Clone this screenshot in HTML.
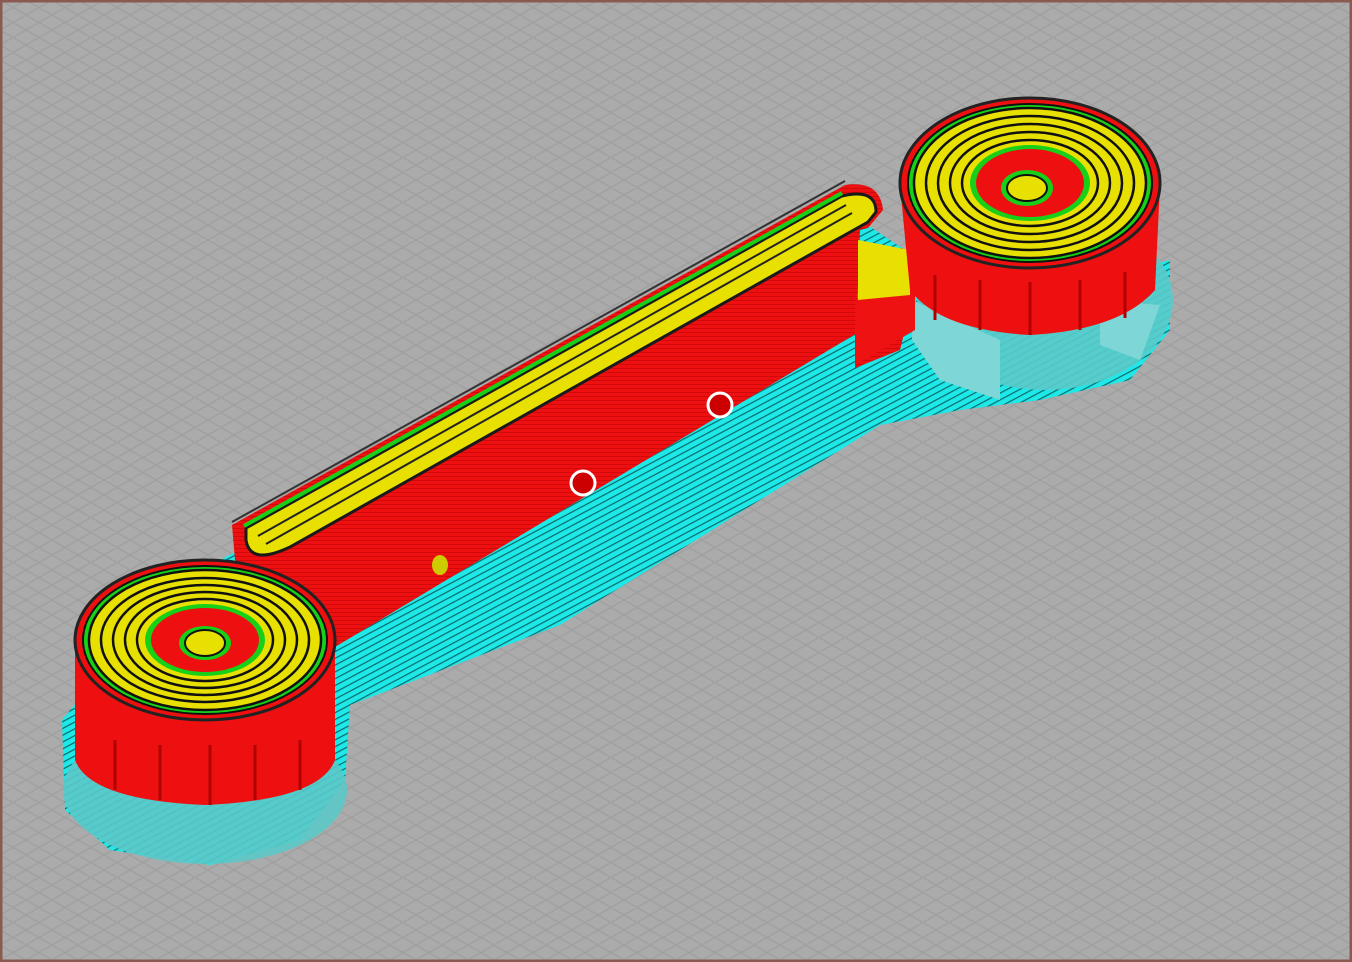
<!DOCTYPE html>
<html><head><style>html,body{margin:0;padding:0;width:1352px;height:962px;overflow:hidden;background:#a9a9a9}</style></head>
<body>
<svg width="1352" height="962" viewBox="0 0 1352 962" xmlns="http://www.w3.org/2000/svg">
<defs>
<pattern id="g" width="26" height="15" patternUnits="userSpaceOnUse">
<rect width="26" height="15" fill="#ababab"/>
<path d="M0 0L26 15M26 0L0 15" stroke="#a0a0a0" stroke-width="1.5"/>
</pattern>
<pattern id="cy" width="6" height="6" patternUnits="userSpaceOnUse" patternTransform="rotate(-28)">
<rect width="6" height="6" fill="#1ee8e8"/><rect width="6" height="1.2" fill="#0a6a6a"/>
</pattern>
<pattern id="rd" width="4" height="4" patternUnits="userSpaceOnUse">
<rect width="4" height="4" fill="#ee1010"/><rect width="4" height="1" fill="#d00a0a"/>
</pattern>
</defs>
<rect width="1352" height="962" fill="url(#g)"/>
<rect x="1" y="1" width="1350" height="960" fill="none" stroke="#8a5a50" stroke-width="3"/>

<!-- cyan base -->
<path d="M220 560 L860 220 L890 240 L980 300 L1100 280 L1170 260 L1170 330 L1130 380 L1040 400 L960 410 L880 425 L560 625 L350 705 L345 780 L300 840 L210 865 L110 850 L65 810 L62 720 L120 650 Z" fill="url(#cy)"/>
<ellipse cx="205" cy="790" rx="142" ry="74" fill="#5cc8c8" opacity="0.9"/>
<ellipse cx="1045" cy="300" rx="128" ry="90" fill="#5ccaca" opacity="0.9"/>
<path d="M912 300 L1000 340 L1000 400 L940 380 L912 340Z" fill="#7ed6d6"/>
<path d="M1100 300 L1160 305 L1140 360 L1100 345Z" fill="#7ed6d6"/>

<!-- red bar -->
<path d="M232 525 L845 185 Q880 180 883 210 L868 228 L860 230 L855 368 L900 350 L912 300 L330 650 L300 640 L235 560 Z" fill="url(#rd)"/>
<path d="M855 300 L915 270 L915 330 L855 365Z" fill="#ee1212"/>
<!-- yellow strip -->
<path d="M246 528 L842 196 Q876 188 876 212 L868 222 L290 547 Q250 566 246 540Z" fill="#e8e000" stroke="#1a1a1a" stroke-width="3"/>
<path d="M258 536 L846 205 M266 544 L852 213" stroke="#222" stroke-width="2"/>
<path d="M244 526 L842 193" stroke="#18d018" stroke-width="4"/>
<path d="M232 522 L845 181" stroke="#333" stroke-width="2"/>
<path d="M858 240 L910 250 L910 295 L858 300Z" fill="#e8e000"/>

<!-- holes -->
<g fill="#fff"><ellipse cx="440" cy="565" rx="8" ry="10" fill="#cc0"/><ellipse cx="583" cy="483" rx="12" ry="12" fill="#c00" stroke="#fff" stroke-width="3"/><ellipse cx="720" cy="405" rx="12" ry="12" fill="#c00" stroke="#fff" stroke-width="3"/></g>

<!-- left knob -->
<path d="M75 640 L75 760 Q90 800 205 805 Q320 800 335 760 L335 640 Z" fill="#ee1010"/>
<g stroke="#b00000" stroke-width="3" fill="none">
<path d="M115 740 V790 M160 745 V800 M210 745 V805 M255 745 V800 M300 740 V790"/>
</g>
<ellipse cx="205" cy="640" rx="130" ry="80" fill="#ee1010" stroke="#222" stroke-width="3"/>
<ellipse cx="205" cy="640" rx="122" ry="74" fill="#18d018" stroke="#111" stroke-width="2"/>
<g fill="none" stroke="#111" stroke-width="2.5">
<ellipse cx="205" cy="640" rx="116" ry="70" fill="#e8e000"/>
<ellipse cx="205" cy="640" rx="104" ry="62"/>
<ellipse cx="205" cy="640" rx="92" ry="55"/>
<ellipse cx="205" cy="640" rx="80" ry="48"/>
<ellipse cx="205" cy="640" rx="68" ry="41"/>
</g>
<ellipse cx="205" cy="640" rx="60" ry="36" fill="#18d018"/>
<ellipse cx="205" cy="640" rx="54" ry="32" fill="#ee1010"/>
<ellipse cx="205" cy="643" rx="26" ry="17" fill="#18d018"/>
<ellipse cx="205" cy="643" rx="20" ry="13" fill="#e8e000" stroke="#111" stroke-width="2"/>

<!-- right knob -->
<path d="M900 185 L910 290 Q940 330 1030 335 Q1120 330 1155 290 L1160 185 Z" fill="#ee1010"/>
<g stroke="#b00000" stroke-width="3" fill="none">
<path d="M935 275 V320 M980 280 V330 M1030 282 V335 M1080 280 V330 M1125 272 V318"/>
</g>
<ellipse cx="1030" cy="183" rx="130" ry="85" fill="#ee1010" stroke="#222" stroke-width="3"/>
<ellipse cx="1030" cy="183" rx="122" ry="79" fill="#18d018" stroke="#111" stroke-width="2"/>
<g fill="none" stroke="#111" stroke-width="2.5">
<ellipse cx="1030" cy="183" rx="116" ry="75" fill="#e8e000"/>
<ellipse cx="1030" cy="183" rx="104" ry="67"/>
<ellipse cx="1030" cy="183" rx="92" ry="59"/>
<ellipse cx="1030" cy="183" rx="80" ry="51"/>
<ellipse cx="1030" cy="183" rx="68" ry="43"/>
</g>
<ellipse cx="1030" cy="183" rx="60" ry="38" fill="#18d018"/>
<ellipse cx="1030" cy="183" rx="54" ry="34" fill="#ee1010"/>
<ellipse cx="1027" cy="188" rx="26" ry="18" fill="#18d018"/>
<ellipse cx="1027" cy="188" rx="20" ry="13" fill="#e8e000" stroke="#111" stroke-width="2"/>
</svg>
</body></html>
